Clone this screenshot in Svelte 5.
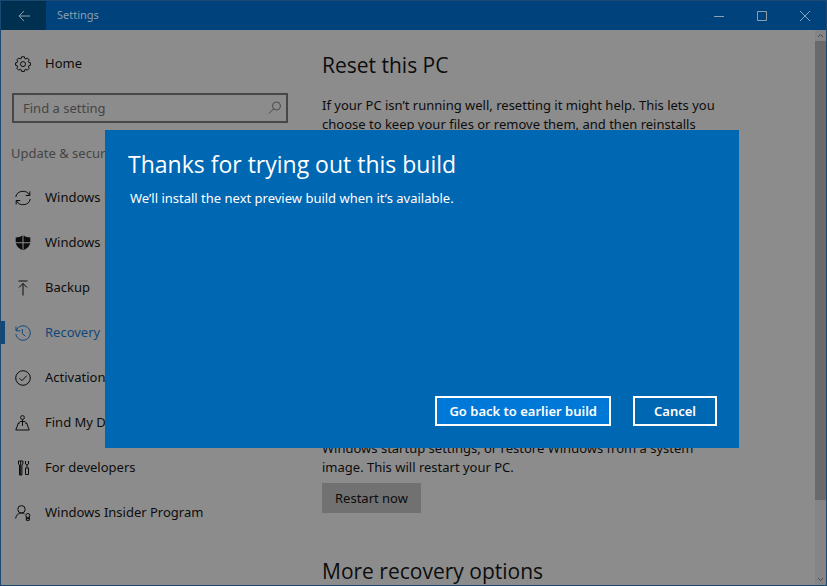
<script lang="ts">
  interface NavItem {
    label: string;
    icon: string;
  }

  const items: NavItem[] = [
    { label: "Windows Update", icon: "sync" },
    { label: "Windows Defender", icon: "shield" },
    { label: "Backup", icon: "backup" },
    { label: "Recovery", icon: "history" },
    { label: "Activation", icon: "check" },
    { label: "Find My Device", icon: "locate" },
    { label: "For developers", icon: "tools" },
    { label: "Windows Insider Program", icon: "insider" },
  ];

  let active = $state("Recovery");
  let query = $state("");
  let open = $state(true);
</script>

{#snippet icon(name: string)}
  <svg class="icon" viewBox="0 0 16 16" aria-hidden="true">
    {#if name === "gear"}
      <path
        d="M6.600.8h2.800l.4 1.700 1 .4 1.500-.9 1.900 1.900-.9 1.500.4 1 1.700.4v2.600l-1.700.4-.4 1 .9 1.500-1.900 1.900-1.500-.9-1 .4-.4 1.700H6.600l-.4-1.700-1-.4-1.500.9-1.900-1.900.9-1.500-.4-1L.6 9.400V6.800l1.700-.4.4-1-.9-1.500L3.700 2l1.500.9 1-.4z"
      />
      <circle cx="8" cy="8.100" r="2.500" />
    {:else if name === "sync"}
      <path d="M.8 7A7.200 6.600 0 0 1 14.500 5.200M14.800 1.500v4h-4M15.200 9A7.200 6.600 0 0 1 1.500 10.800M1.200 14.500v-4h4" />
    {:else if name === "shield"}
      <path class="solid" d="M.7 2.600Q5 2.400 7.500.5V7.200H.7zM8.500.5Q11 2.400 15.300 2.600V7.200H8.500zM.8 8.200H7.500V15.300Q1.800 12.500.8 8.200zM8.500 8.200h6.700Q14.200 12.500 8.500 15.300z" />
    {:else if name === "backup"}
      <path d="M3.500 1h9M8 15.500V3.500M4 7.500l4-4 4 4" />
    {:else if name === "history"}
      <path d="M1 1.500v4.300h4.300M1.300 5.500A7.200 7.200 0 1 1 .9 9M7.300 4v4.500l3 2.700" />
    {:else if name === "check"}
      <circle cx="8" cy="8" r="7.300" />
      <path d="M4.500 8.200l2.500 2.500 4.700-5" />
    {:else if name === "locate"}
      <circle cx="7.500" cy="2.500" r="1.900" />
      <path d="M7.500 4.400v6.600M5 6.500h5M4.500 8.500H3.200L.8 15h13.400L11.800 8.500H10.500M5 6.500L3.200 8.500M10 6.500l1.800 2" />
    {:else if name === "tools"}
      <path d="M3.500 1v3l1 1v10h2.400V5l1-1V1M5.700 1v14M10.500 1v3l1.500 1 1.500-1V1M12 5v3M10.500 8h3v6.500h-3zM3.500 1h4.400" />
    {:else if name === "insider"}
      <circle cx="6.500" cy="4.300" r="3.700" />
      <path d="M.6 13.500Q1.600 8 6.500 8q1.800 0 3 .8" />
      <circle cx="12.800" cy="10.500" r="2" />
      <path d="M11.300 12v3.300h3V12M11.300 13.500h3" />
    {:else if name === "search"}
      <circle cx="9.500" cy="6" r="4" />
      <path d="M6.600 8.900L2 13.500" />
    {/if}
  </svg>
{/snippet}

<div class="window">
  <header class="titlebar">
    <button class="back" aria-label="Back">
      <svg class="glyph" viewBox="0 0 12 12"><path d="M12 6H1M6 1L1 6l5 5" /></svg>
    </button>
    <span class="caption">Settings</span>
    <button class="control" aria-label="Minimize">
      <svg class="glyph" viewBox="0 0 12 12"><path d="M1 6.500h10" /></svg>
    </button>
    <button class="control" aria-label="Maximize">
      <svg class="glyph" viewBox="0 0 12 12"><path d="M1.500 1.500h9v9h-9z" /></svg>
    </button>
    <button class="control" aria-label="Close">
      <svg class="glyph" viewBox="0 0 12 12"><path d="M1 1l10 10M11 1L1 11" /></svg>
    </button>
  </header>

  <div class="body">
    <aside class="sidebar">
      <button class="item">
        {@render icon("gear")}
        Home
      </button>
      <label class="search">
        <input type="text" placeholder="Find a setting" aria-label="Find a setting" bind:value={query} />
        {@render icon("search")}
      </label>
      <h2 class="group">Update &amp; security</h2>
      <nav>
        {#each items as item (item.label)}
          <button class="item" class:active={active === item.label} onclick={() => (active = item.label)}>
            {@render icon(item.icon)}
            {item.label}
          </button>
        {/each}
      </nav>
    </aside>

    <main>
      <section class="reset">
        <h1>Reset this PC</h1>
        <p>
          If your PC isn’t running well, resetting it might help. This lets you choose to keep your
          files or remove them, and then reinstalls
        </p>
      </section>
      <section>
        <p>
          Windows startup settings, or restore Windows from a system image. This will restart your
          PC.
        </p>
        <button class="action">Restart now</button>
      </section>
      <section>
        <h1>More recovery options</h1>
      </section>
    </main>

    <div class="scrollbar" aria-hidden="true">
      <svg class="arrow" viewBox="0 0 11 11"><path d="M3 7l2.500-2.500L8 7" /></svg>
      <div class="thumb"></div>
      <svg class="arrow" viewBox="0 0 11 11"><path d="M3 4l2.500 2.500L8 4" /></svg>
    </div>
  </div>

  {#if open}
    <div class="dialog" role="dialog" aria-labelledby="dialog-title">
      <h1 id="dialog-title">Thanks for trying out this build</h1>
      <p>We’ll install the next preview build when it’s available.</p>
      <div class="buttons">
        <button class="primary" onclick={() => (open = false)}>Go back to earlier build</button>
        <button onclick={() => (open = false)}>Cancel</button>
      </div>
    </div>
  {/if}
</div>

<style>
  :global(body) {
    background: #8c8c8c;
  }

  .window {
    position: relative;
    box-sizing: border-box;
    height: 100vh;
    border: 1px solid #1c4871;
    overflow: hidden;
    display: flex;
    flex-direction: column;
    font-family: "Noto Sans", "Open Sans", sans-serif;
    font-size: 13px;
    line-height: 19px;
    color: #0c0c0c;
    background: #8c8c8c;
  }

  button {
    border: none;
    padding: 0;
    font: inherit;
    color: inherit;
    background: none;
  }

  h1,
  h2,
  p {
    margin: 0;
    font-weight: 400;
  }

  h1 {
    font-family: "Open Sans", "Noto Sans", sans-serif;
  }

  svg {
    fill: none;
    stroke: currentColor;
    flex: none;
  }

  .titlebar {
    flex: none;
    display: flex;
    align-items: stretch;
    height: 29px;
    color: #8f9fae;
    background: #00437c;
  }

  .back {
    width: 45px;
    background: #00304f;
  }

  .caption {
    flex: 1;
    padding-left: 11px;
    font-size: 11px;
    line-height: 28px;
  }

  .control {
    width: 43px;
  }

  .glyph {
    display: block;
    width: 12px;
    height: 12px;
    margin: 0 auto;
  }

  .body {
    flex: 1;
    min-height: 0;
    display: flex;
  }

  .sidebar {
    flex: none;
    width: 287px;
    padding-top: 11px;
  }

  .item {
    display: flex;
    align-items: center;
    gap: 14px;
    width: 100%;
    height: 45px;
    padding-left: 14px;
    text-align: left;
    white-space: nowrap;
  }

  .icon {
    width: 16px;
    height: 16px;
  }

  .icon .solid {
    fill: currentColor;
    stroke: none;
  }

  .active {
    color: #12477a;
    background: linear-gradient(#12477a, #12477a) left / 4px 23px no-repeat;
  }

  .search {
    display: flex;
    align-items: center;
    box-sizing: border-box;
    height: 30px;
    margin: 7px 0 0 11px;
    padding: 0 3px 0 9px;
    border: 2px solid #474747;
    color: #4a4a4a;
  }

  .search input {
    flex: 1;
    min-width: 0;
    border: none;
    padding: 0;
    outline: none;
    font: inherit;
    color: inherit;
    background: none;
  }

  .search input::placeholder {
    color: #454545;
    opacity: 1;
  }

  .group {
    margin: 21px 0 12px;
    padding-left: 10px;
    font-size: 13px;
    color: #454545;
  }

  main {
    flex: 1;
    padding: 19px 80px 0 34px;
    overflow: hidden;
  }

  main section {
    max-width: 400px;
    margin-bottom: 42px;
  }

  main .reset {
    min-height: 348px;
  }

  main h1 {
    font-size: 21px;
    line-height: 32px;
    margin-bottom: 15px;
  }

  .action {
    height: 30px;
    margin-top: 6px;
    padding: 0 13px;
    background: #717171;
  }

  .scrollbar {
    flex: none;
    display: flex;
    flex-direction: column;
    width: 11px;
    background: #858585;
    color: #4c4c4c;
  }

  .arrow {
    width: 11px;
    height: 11px;
  }

  .thumb {
    flex: 1;
    margin-bottom: 74px;
    background: #6a6a6a;
  }

  .dialog {
    position: absolute;
    top: 129px;
    right: 87px;
    left: 104px;
    box-sizing: border-box;
    min-height: 318px;
    padding: 18px 22px 22px 23px;
    display: flex;
    flex-direction: column;
    color: #fff;
    background: #0067b3;
  }

  .dialog h1 {
    font-size: 23px;
    line-height: 32px;
  }

  .dialog p {
    margin-top: 9px;
    padding-left: 2px;
  }

  .buttons {
    display: flex;
    justify-content: flex-end;
    gap: 22px;
    margin-top: auto;
  }

  .buttons button {
    height: 30px;
    padding: 0 19px;
    border: 2px solid #fff;
    font-weight: 600;
  }

  .buttons .primary {
    padding: 0 12px;
    background: #0078d7;
  }
</style>
